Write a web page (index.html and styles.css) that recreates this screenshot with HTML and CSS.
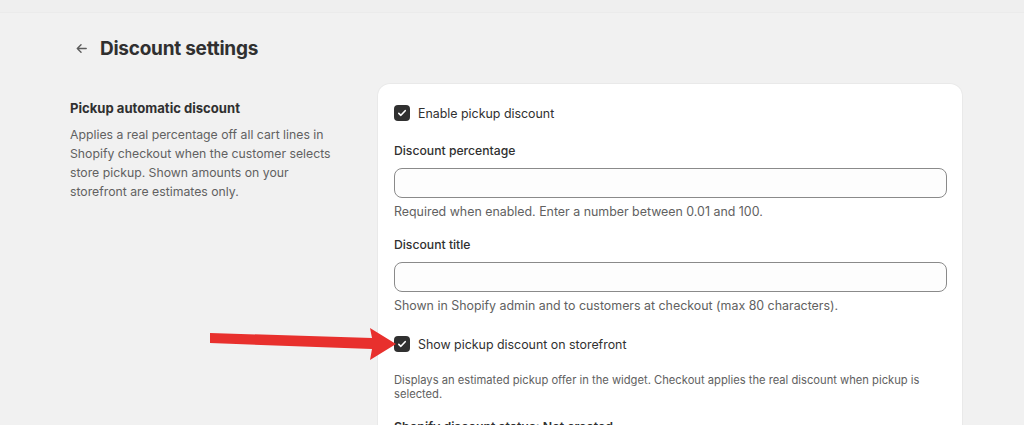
FILE: index.html
```html
<!DOCTYPE html>
<html lang="en">
<head>
    <meta charset="UTF-8">
    <meta name="viewport" content="width=device-width, initial-scale=1.0">
    <title>Discount settings</title>
    <link rel="stylesheet" href="styles.css">
</head>
<body>
    <div class="topbar"></div>

    <div class="page">
        <div class="page-header">
            <svg class="back" viewBox="0 0 16 16"><path d="M13 8H3.5M7.5 4L3.5 8l4 4" /></svg>
            <h1>Discount settings</h1>
        </div>

        <div class="layout">
            <div class="section-info">
                <h2>Pickup automatic discount</h2>
                <p>Applies a real percentage off all cart lines in Shopify checkout when the customer selects store pickup. Shown amounts on your storefront are estimates only.</p>
            </div>

            <div class="card">
                <label class="check">
                    <span class="box"><svg viewBox="0 0 16 16"><path d="M4.8 8.3l2.1 2 4.3-4.6" /></svg></span>
                    Enable pickup discount
                </label>

                <div class="field">
                    <div class="field-label">Discount percentage</div>
                    <input type="text" class="text-input">
                    <div class="help">Required when enabled. Enter a number between 0.01 and 100.</div>
                </div>

                <div class="field field-title">
                    <div class="field-label">Discount title</div>
                    <input type="text" class="text-input">
                    <div class="help">Shown in Shopify admin and to customers at checkout (max 80 characters).</div>
                </div>

                <label class="check check-storefront">
                    <span class="box"><svg viewBox="0 0 16 16"><path d="M4.8 8.3l2.1 2 4.3-4.6" /></svg></span>
                    Show pickup discount on storefront
                    <!-- red pointer arrow -->
                    <svg class="pointer" viewBox="0 0 186 33">
                        <polygon points="0,5 162,10 160,0 186,16 160,32 162,21 0,15" />
                    </svg>
                </label>
                <div class="note">Displays an estimated pickup offer in the widget. Checkout applies the real discount when pickup is selected.</div>

                <div class="status">Shopify discount status: Not created</div>
            </div>
        </div>
    </div>
</body>
</html>
```

FILE: styles.css
```css
body {
    margin: 0;
    background: #f1f1f1;
    font-family: Inter, "Noto Sans", sans-serif;
    font-size: 13px;
    color: #303030;
}
.topbar {
    height: 12px;
    background: #efefef;
    border-bottom: 1px solid #ebebeb;
}
.page {
    padding: 0 0 0 70px;
}
.page-header {
    display: flex;
    align-items: center;
    gap: 11px;
    height: 70px;
}
.back {
    width: 15px;
    height: 15px;
    margin-left: 4px;
    fill: none;
    stroke: #5c5c5c;
    stroke-width: 1.5;
    stroke-linecap: round;
    stroke-linejoin: round;
}
.page-header h1 {
    margin: 0;
    font-size: 19px;
    font-weight: 700;
    letter-spacing: -0.25px;
}
.layout {
    display: grid;
    grid-template-columns: 270px 584px;
    gap: 38px;
    margin-top: 1px;
}
.section-info h2 {
    margin: 16px 0 0;
    font-size: 13.1px;
    font-weight: 650;
}
.section-info p {
    margin: 9px 0 0;
    color: #616161;
    font-size: 12.25px;
    line-height: 19px;
}
.card {
    background: #fff;
    border-radius: 12px;
    box-shadow: 0 1px 0 rgba(0, 0, 0, 0.07), 0 0 0 1px rgba(0, 0, 0, 0.03);
    padding: 20px 15px 16px 16px;
}
.check {
    position: relative;
    display: flex;
    align-items: center;
    gap: 8px;
    font-size: 12.4px;
    height: 18px;
}
.box {
    width: 16px;
    height: 16px;
    border-radius: 4px;
    background: #303030;
    display: flex;
}
.box svg {
    width: 16px;
    height: 16px;
    fill: none;
    stroke: #fff;
    stroke-width: 1.6;
    stroke-linecap: round;
    stroke-linejoin: round;
}
.field {
    margin-top: 20px;
}
.field-title {
    margin-top: 16px;
}
.field-label {
    font-size: 12.2px;
    line-height: 18px;
    font-weight: 500;
}
.text-input {
    display: block;
    box-sizing: border-box;
    width: 100%;
    height: 30px;
    margin-top: 8px;
    border: 1px solid #8a8a8a;
    border-radius: 8px;
    background: #fdfdfd;
}
.help {
    margin-top: 6px;
    color: #616161;
    font-size: 12.4px;
    line-height: 16px;
}
.check-storefront {
    margin-top: 21px;
}
.note {
    margin-top: 20px;
    color: #616161;
    font-size: 11.2px;
    line-height: 14px;
}
.pointer {
    position: absolute;
    left: -184px;
    top: -7px;
    width: 186px;
    height: 33px;
    fill: #e8302d;
}
.status {
    margin-top: 17px;
    font-weight: 600;
    font-size: 12.4px;
    line-height: 18px;
}
```
